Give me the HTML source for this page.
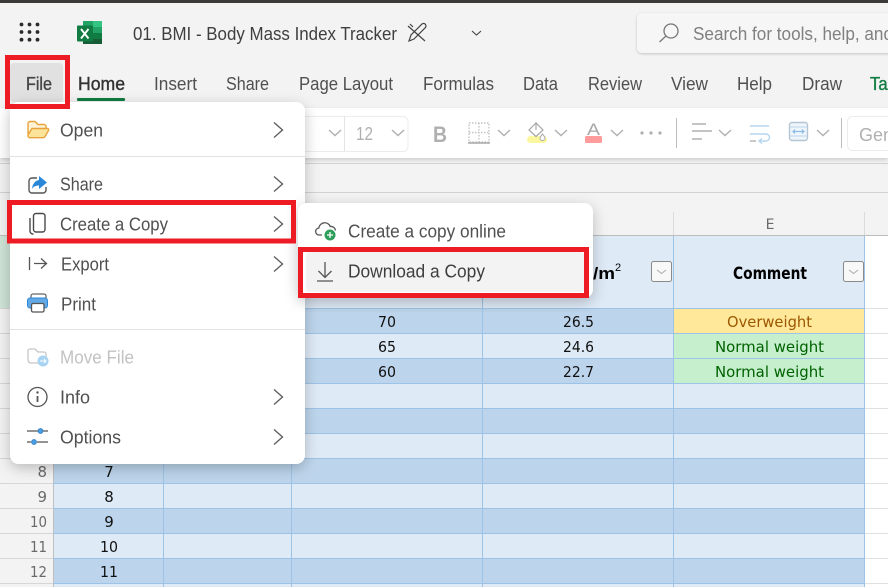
<!DOCTYPE html>
<html><head><meta charset="utf-8"><title>Excel</title>
<style>
html,body{margin:0;padding:0;width:888px;height:587px;overflow:hidden;background:#f3f3f3}
svg{display:block}
text{font-family:"Liberation Sans",sans-serif;fill:#424242;font-size:18px}
.m{fill:#505050}
.tab{fill:#505050}
.c{font-family:"DejaVu Sans",sans-serif;fill:#111;font-size:15px}
.r{font-family:"DejaVu Sans",sans-serif;fill:#6a6a6a;font-size:15px}
</style></head><body>
<svg width="888" height="587" viewBox="0 0 888 587" xmlns="http://www.w3.org/2000/svg">
<defs>
<filter id="sh" x="-15%" y="-15%" width="130%" height="130%"><feDropShadow dx="0" dy="4" stdDeviation="7" flood-color="#000" flood-opacity=".24"/></filter>
<filter id="sh2" x="-10%" y="-30%" width="120%" height="160%"><feDropShadow dx="0" dy="2" stdDeviation="2" flood-color="#000" flood-opacity=".16"/></filter>
<filter id="sh3" x="-10%" y="-30%" width="120%" height="160%"><feDropShadow dx="0" dy="1" stdDeviation="1.2" flood-color="#000" flood-opacity=".2"/></filter>
</defs>
<rect width="888" height="587" fill="#f3f3f3"/>
<rect width="888" height="3" fill="#3b3a39"/>

<!-- app bar -->
<g fill="#2b2b2b"><circle cx="21.5" cy="24.5" r="1.9"/><circle cx="29.5" cy="24.5" r="1.9"/><circle cx="37.5" cy="24.5" r="1.9"/><circle cx="21.5" cy="32" r="1.9"/><circle cx="29.5" cy="32" r="1.9"/><circle cx="37.5" cy="32" r="1.9"/><circle cx="21.5" cy="39.7" r="1.9"/><circle cx="29.5" cy="39.7" r="1.9"/><circle cx="37.5" cy="39.7" r="1.9"/></g>
<rect x="83" y="21" width="19" height="6" fill="#33c481"/><rect x="83" y="21" width="10" height="6" fill="#21a366"/>
<rect x="83" y="27" width="19" height="6" fill="#21a366"/><rect x="83" y="33" width="19" height="6" fill="#107c41"/><rect x="83" y="39" width="19" height="5" fill="#185c37"/>
<rect x="77" y="25.5" width="16" height="16" rx="1" fill="#107c41"/>
<path d="M81 29l7.500 9.500M88.500 29L81 38.500" stroke="#fff" stroke-width="1.900" fill="none"/>
<text x="133" y="40" textLength="264" lengthAdjust="spacingAndGlyphs" style="fill:#3f3f3f">01. BMI - Body Mass Index Tracker</text>
<g fill="none" stroke="#424242" stroke-width="1.2"><path d="M409 41l2-6 11-11c1.500-1 3-.5 3.500 .5s.8 2.500-.5 3.500L414 39z"/><path d="M408 26l17 15M410 24l3 3"/></g>
<path d="M472 31l4.500 4 4.500-4" fill="none" stroke="#444" stroke-width="1.100"/>
<rect x="637" y="13" width="270" height="40" rx="5" fill="#f6f6f6" filter="url(#sh3)"/>
<circle cx="671" cy="31" r="7" fill="none" stroke="#777" stroke-width="1.300"/><path d="M666 36l-6.500 6" stroke="#777" stroke-width="1.300"/>
<text x="693" y="40" textLength="200" lengthAdjust="spacingAndGlyphs" style="fill:#808080">Search for tools, help, and</text>

<!-- tabs -->
<rect x="10" y="63" width="53" height="39" rx="4" fill="#e1e1e1"/>
<text x="26" y="90" textLength="26" lengthAdjust="spacingAndGlyphs" style="fill:#444;stroke:#444;stroke-width:.35">File</text>
<text x="78" y="90" textLength="47" lengthAdjust="spacingAndGlyphs" style="fill:#333;stroke:#333;stroke-width:.4">Home</text>
<text class="tab" x="154" y="90" textLength="43" lengthAdjust="spacingAndGlyphs">Insert</text>
<text class="tab" x="226" y="90" textLength="43" lengthAdjust="spacingAndGlyphs">Share</text>
<text class="tab" x="299" y="90" textLength="94" lengthAdjust="spacingAndGlyphs">Page Layout</text>
<text class="tab" x="423" y="90" textLength="71" lengthAdjust="spacingAndGlyphs">Formulas</text>
<text class="tab" x="523" y="90" textLength="35" lengthAdjust="spacingAndGlyphs">Data</text>
<text class="tab" x="588" y="90" textLength="54" lengthAdjust="spacingAndGlyphs">Review</text>
<text class="tab" x="671" y="90" textLength="37" lengthAdjust="spacingAndGlyphs">View</text>
<text class="tab" x="737" y="90" textLength="35" lengthAdjust="spacingAndGlyphs">Help</text>
<text class="tab" x="802" y="90" textLength="40" lengthAdjust="spacingAndGlyphs">Draw</text>
<text x="870" y="90" textLength="40" lengthAdjust="spacingAndGlyphs" style="fill:#107c41;stroke:#107c41;stroke-width:.35">Table</text>
<rect x="77" y="98" width="48" height="3" rx="1" fill="#107c41"/>

<!-- toolbar -->
<rect x="0" y="108" width="888" height="50" fill="#fff" filter="url(#sh2)"/>
<rect x="250" y="116.500" width="158" height="35" rx="5" fill="#fff" stroke="#ececec"/>
<path d="M344.500 116v35" stroke="#e4e4e4"/>
<g fill="none" stroke="#b0b0b0" stroke-width="1.400">
<path d="M329 130l6 5.500 6-5.500M392 130l6 5.500 6-5.500M498 130l6 5.500 6-5.500M555 130l6 5.500 6-5.500M611 130l6 5.500 6-5.500M719 130l6 5.500 6-5.500M817 130l6 5.500 6-5.500"/>
<path d="M469 123h20v19h-20zM479 123v19M469 132.500h20" stroke-dasharray="1.500 1.500" stroke="#c4c4c4"/>
<path d="M468 143h22" stroke="#a8a8a8"/>
<path d="M692 124h14M692 131h20M692 139h10"/>
</g>
<text x="356" y="140" textLength="17" lengthAdjust="spacingAndGlyphs" style="fill:#b0b0b0">12</text>
<text x="433" y="142" textLength="14" lengthAdjust="spacingAndGlyphs" style="fill:#b0b0b0;font-weight:700;font-size:22px">B</text>
<rect x="527" y="136" width="20" height="7" rx="3.500" fill="#fbf79f"/>
<path d="M536 123l-7 7 7 6.500 7-6.500zM536 122v8" fill="none" stroke="#a8a8a8" stroke-width="1.200"/>
<path d="M542.500 134c1.500 2 2.500 3 2.500 4a2.500 2.500 0 0 1-5 0c0-1 1-2 2.500-4z" fill="#fff" stroke="#a8a8a8"/>
<text x="587" y="135" textLength="13" lengthAdjust="spacingAndGlyphs" style="fill:#a8a8a8;font-size:17px">A</text>
<rect x="585" y="136" width="17" height="7" rx="1.500" fill="#ff9b9b"/>
<g fill="#b0b0b0"><circle cx="642" cy="133" r="1.600"/><circle cx="651" cy="133" r="1.600"/><circle cx="660" cy="133" r="1.600"/></g>
<path d="M676.500 118v30M841.500 118v30" stroke="#bdbdbd"/>
<path d="M750 126h19M750 134h16a3.500 3.500 0 0 1 0 7h-6M762 138.500l-3 2.500 3 2.500" fill="none" stroke="#b5d6f0" stroke-width="1.400"/>
<path d="M750 141h6" stroke="#b0b0b0" stroke-width="1.400"/>
<rect x="789.500" y="122.500" width="18" height="18" rx="2.500" fill="#eef5fb" stroke="#b4c6d6" stroke-width="1.400"/>
<path d="M790 127h17M790 136h17" stroke="#c8dcee" stroke-width="1.200"/>
<path d="M793 131.500h11M795 129.500l-2 2 2 2M802 129.500l2 2-2 2" fill="none" stroke="#8dbde6" stroke-width="1.200"/>
<rect x="847.500" y="116.500" width="60" height="34" rx="5" fill="#fff" stroke="#ececec"/>
<text x="859" y="141" textLength="34" lengthAdjust="spacingAndGlyphs" style="fill:#b0b0b0">Gen</text>

<!-- formula bar -->
<path d="M0 163.500h888M0 192.500h888" stroke="#d2d2d2"/>

<!-- grid -->
<rect x="0" y="235" width="888" height="352" fill="#fff"/>
<rect x="0" y="235" width="53" height="352" fill="#f3f3f3"/>
<rect x="0" y="235" width="53" height="73" fill="#cfe3d7"/>
<rect x="53" y="235" width="811" height="73" fill="#deeaf6"/>
<g fill="#bdd5ec"><rect x="53" y="308" width="620" height="25"/><rect x="53" y="358" width="620" height="25"/><rect x="53" y="408" width="811" height="25"/><rect x="53" y="458" width="811" height="25"/><rect x="53" y="508" width="811" height="25"/><rect x="53" y="558" width="811" height="25"/></g>
<g fill="#deeaf6"><rect x="53" y="333" width="620" height="25"/><rect x="53" y="383" width="811" height="25"/><rect x="53" y="433" width="811" height="25"/><rect x="53" y="483" width="811" height="25"/><rect x="53" y="533" width="811" height="25"/><rect x="53" y="583" width="811" height="4"/></g>
<rect x="673" y="308" width="191" height="25" fill="#ffe89a"/>
<rect x="673" y="333" width="191" height="50" fill="#c6efce"/>
<g stroke="#e0e0e0"><path d="M864 308.500h24M864 333.500h24M864 358.500h24M864 383.500h24M864 408.500h24M864 433.500h24M864 458.500h24M864 483.500h24M864 508.500h24M864 533.500h24M864 558.500h24M864 583.500h24"/></g>
<g stroke="#d6d6d6"><path d="M0 308.500h53M0 333.500h53M0 358.500h53M0 383.500h53M0 408.500h53M0 433.500h53M0 458.500h53M0 483.500h53M0 508.500h53M0 533.500h53M0 558.500h53M0 583.500h53"/></g>
<path d="M53.500 235v352" stroke="#bfbfbf"/>
<g stroke="#9dc3e6"><path d="M53 308.500h811M53 333.500h811M53 358.500h811M53 383.500h811M53 408.500h811M53 433.500h811M53 458.500h811M53 483.500h811M53 508.500h811M53 533.500h811M53 558.500h811M53 583.500h811"/><path d="M163.500 235v352M291.500 235v352M482.500 235v352M673.500 235v352M864.500 235v352"/></g>
<path d="M0 235.500h888" stroke="#bdbdbd"/>
<path d="M673.500 212v23M864.500 212v23" stroke="#dcdcdc"/>
<text class="r" x="770" y="229" text-anchor="middle" style="font-size:14px">E</text>

<!-- header cells -->
<text x="593" y="279" textLength="22" lengthAdjust="spacingAndGlyphs" style="fill:#000;font-weight:700;font-size:17px">/m</text>
<text x="615" y="271" style="fill:#000;font-size:11px">2</text>
<text x="733" y="279" textLength="74" lengthAdjust="spacingAndGlyphs" style="fill:#000;font-weight:700;font-size:17px;font-family:'DejaVu Sans',sans-serif">Comment</text>
<rect x="651.500" y="261.500" width="20" height="20" rx="2" fill="#f8f8f8" stroke="#8a8a8a"/>
<rect x="843.500" y="261.500" width="20" height="20" rx="2" fill="#f8f8f8" stroke="#8a8a8a"/>
<path d="M657 270l4.500 3.500 4.500-3.500M849 270l4.500 3.500 4.500-3.500" fill="none" stroke="#aaa"/>

<!-- data -->
<text class="c" x="378" y="327" textLength="18" lengthAdjust="spacingAndGlyphs">70</text>
<text class="c" x="378" y="352" textLength="18" lengthAdjust="spacingAndGlyphs">65</text>
<text class="c" x="378" y="377" textLength="18" lengthAdjust="spacingAndGlyphs">60</text>
<text class="c" x="563" y="327" textLength="31" lengthAdjust="spacingAndGlyphs">26.5</text>
<text class="c" x="563" y="352" textLength="31" lengthAdjust="spacingAndGlyphs">24.6</text>
<text class="c" x="563" y="377" textLength="31" lengthAdjust="spacingAndGlyphs">22.7</text>
<text class="c" x="727" y="327" textLength="85" lengthAdjust="spacingAndGlyphs" style="fill:#9c5700">Overweight</text>
<text class="c" x="715" y="352" textLength="109" lengthAdjust="spacingAndGlyphs" style="fill:#006100">Normal weight</text>
<text class="c" x="715" y="377" textLength="109" lengthAdjust="spacingAndGlyphs" style="fill:#006100">Normal weight</text>
<text class="c" x="109" y="477" text-anchor="middle">7</text>
<text class="c" x="109" y="502" text-anchor="middle">8</text>
<text class="c" x="109" y="527" text-anchor="middle">9</text>
<text class="c" x="100" y="552" textLength="18" lengthAdjust="spacingAndGlyphs">10</text>
<text class="c" x="100" y="577" textLength="18" lengthAdjust="spacingAndGlyphs">11</text>
<text class="r" x="47" y="477" text-anchor="end">8</text>
<text class="r" x="47" y="502" text-anchor="end">9</text>
<text class="r" x="30" y="527" textLength="17" lengthAdjust="spacingAndGlyphs">10</text>
<text class="r" x="30" y="552" textLength="17" lengthAdjust="spacingAndGlyphs">11</text>
<text class="r" x="30" y="577" textLength="17" lengthAdjust="spacingAndGlyphs">12</text>

<!-- file menu -->
<rect x="10" y="102" width="295" height="362" rx="9" fill="#fff" filter="url(#sh)"/>
<path d="M10 156.500h295M10 329.500h295" stroke="#e2e2e2"/>
<text class="m" x="60" y="136.500" textLength="43" lengthAdjust="spacingAndGlyphs">Open</text>
<text class="m" x="60" y="190.500" textLength="43" lengthAdjust="spacingAndGlyphs">Share</text>
<text class="m" x="60" y="230.500" textLength="108" lengthAdjust="spacingAndGlyphs">Create a Copy</text>
<text class="m" x="61" y="270.500" textLength="48" lengthAdjust="spacingAndGlyphs">Export</text>
<text class="m" x="61" y="310.500" textLength="35" lengthAdjust="spacingAndGlyphs">Print</text>
<text x="60" y="363.500" textLength="74" lengthAdjust="spacingAndGlyphs" style="fill:#c2c2c2">Move File</text>
<text class="m" x="60" y="403.500" textLength="30" lengthAdjust="spacingAndGlyphs">Info</text>
<text class="m" x="60" y="443.500" textLength="61" lengthAdjust="spacingAndGlyphs">Options</text>
<g fill="none" stroke="#616161" stroke-width="1.400"><path d="M274 122.500l8.500 7.500-8.500 7.500M274 176.500l8.500 7.500-8.500 7.500M274 216.500l8.500 7.500-8.500 7.500M274 256.500l8.500 7.500-8.500 7.500M274 389.500l8.500 7.500-8.500 7.500M274 429.500l8.500 7.500-8.500 7.500"/></g>

<!-- icons -->
<path d="M28 134v-10.500a2 2 0 0 1 2-2h5l3 3h6a2 2 0 0 1 2 2v2" fill="#fff3d6" stroke="#e8a33d" stroke-width="1.400"/>
<path d="M28 135l4-6.500h15.500a1.300 1.300 0 0 1 1 2l-3.500 6.200a2 2 0 0 1-1.700 1H30a2 2 0 0 1-2-2z" fill="#fbe39a" stroke="#e8a33d" stroke-width="1.400"/>
<path d="M37 178h-5a3 3 0 0 0-3 3v9a3 3 0 0 0 3 3h11a3 3 0 0 0 3-3v-3" fill="none" stroke="#555" stroke-width="1.400"/>
<path d="M39 176l8 6.500-8 6.500v-3.500c-3.500 0-5.500 1-7 3.500 .5-5 3-8.500 7-9z" fill="#2b88d8"/>
<rect x="33.500" y="213.500" width="11.500" height="18.500" rx="2.500" fill="#fff" stroke="#4a4a4a" stroke-width="1.400"/>
<path d="M33.500 234h-.5a3 3 0 0 1-3-3v-13" fill="none" stroke="#4a4a4a" stroke-width="1.400"/>
<path d="M29.500 257v13M34 263.500h12M41 258.500l5.500 5-5.500 5" fill="none" stroke="#555" stroke-width="1.300"/>
<rect x="31" y="294" width="15" height="6" rx="2" fill="#fff" stroke="#666" stroke-width="1.300"/>
<rect x="27.500" y="298" width="20" height="10" rx="2.500" fill="#62a8e5" stroke="#2b88d8"/>
<rect x="31.500" y="303.500" width="12.500" height="8.500" rx="1.500" fill="#fff" stroke="#555" stroke-width="1.300"/>
<path d="M28 360v-9a2 2 0 0 1 2-2h5l3 3h6a2 2 0 0 1 2 2v3M28 360a4 4 0 0 0 2 3h9" fill="none" stroke="#c6c6c6" stroke-width="1.300"/>
<circle cx="43" cy="361" r="5.500" fill="#a9d3f2"/><path d="M40 361h6M44 359l2 2-2 2" stroke="#fff" fill="none"/>
<circle cx="37.500" cy="397" r="9.500" fill="none" stroke="#555" stroke-width="1.300"/><path d="M37.500 396v6" stroke="#555" stroke-width="1.800"/><circle cx="37.500" cy="392.500" r="1.200" fill="#555"/>
<path d="M27 431h11M43 431h5M27 442h4M37 442h11" stroke="#555" stroke-width="1.200"/>
<circle cx="40.500" cy="431" r="2.500" fill="#4a9ee0" stroke="#2b78c2" stroke-width=".7"/><circle cx="34" cy="442" r="2.500" fill="#4a9ee0" stroke="#2b78c2" stroke-width=".7"/>

<!-- submenu -->
<rect x="298" y="203" width="295" height="95" rx="9" fill="#fff" filter="url(#sh)"/>
<rect x="306" y="252" width="278" height="40" rx="3" fill="#f3f3f3"/>
<text class="m" x="348" y="237.500" textLength="158" lengthAdjust="spacingAndGlyphs">Create a copy online</text>
<text class="m" style="fill:#3e3e3e" x="348" y="277.500" textLength="137" lengthAdjust="spacingAndGlyphs">Download a Copy</text>
<path d="M322 235h-2.500a3.500 3.500 0 0 1-.7-7 6 6 0 0 1 11.500-1.500 4.500 4.500 0 0 1 5.200 4" fill="none" stroke="#555" stroke-width="1.300"/>
<circle cx="330" cy="235" r="5.500" fill="#2e9e5b"/><path d="M327 235h6M330 232v6" stroke="#fff" stroke-width="1.300"/>
<path d="M325 262v15M318.500 271l6.500 6.500 6.500-6.500M317 281h16" fill="none" stroke="#555" stroke-width="1.300"/>

<!-- red annotations -->
<g fill="none" stroke="#ed1c24" stroke-width="5">
<rect x="7.500" y="57.500" width="60" height="49"/>
<rect x="9.500" y="202.500" width="284" height="38.500"/>
<rect x="300.500" y="249.500" width="286" height="46"/>
</g>
</svg>
</body></html>
